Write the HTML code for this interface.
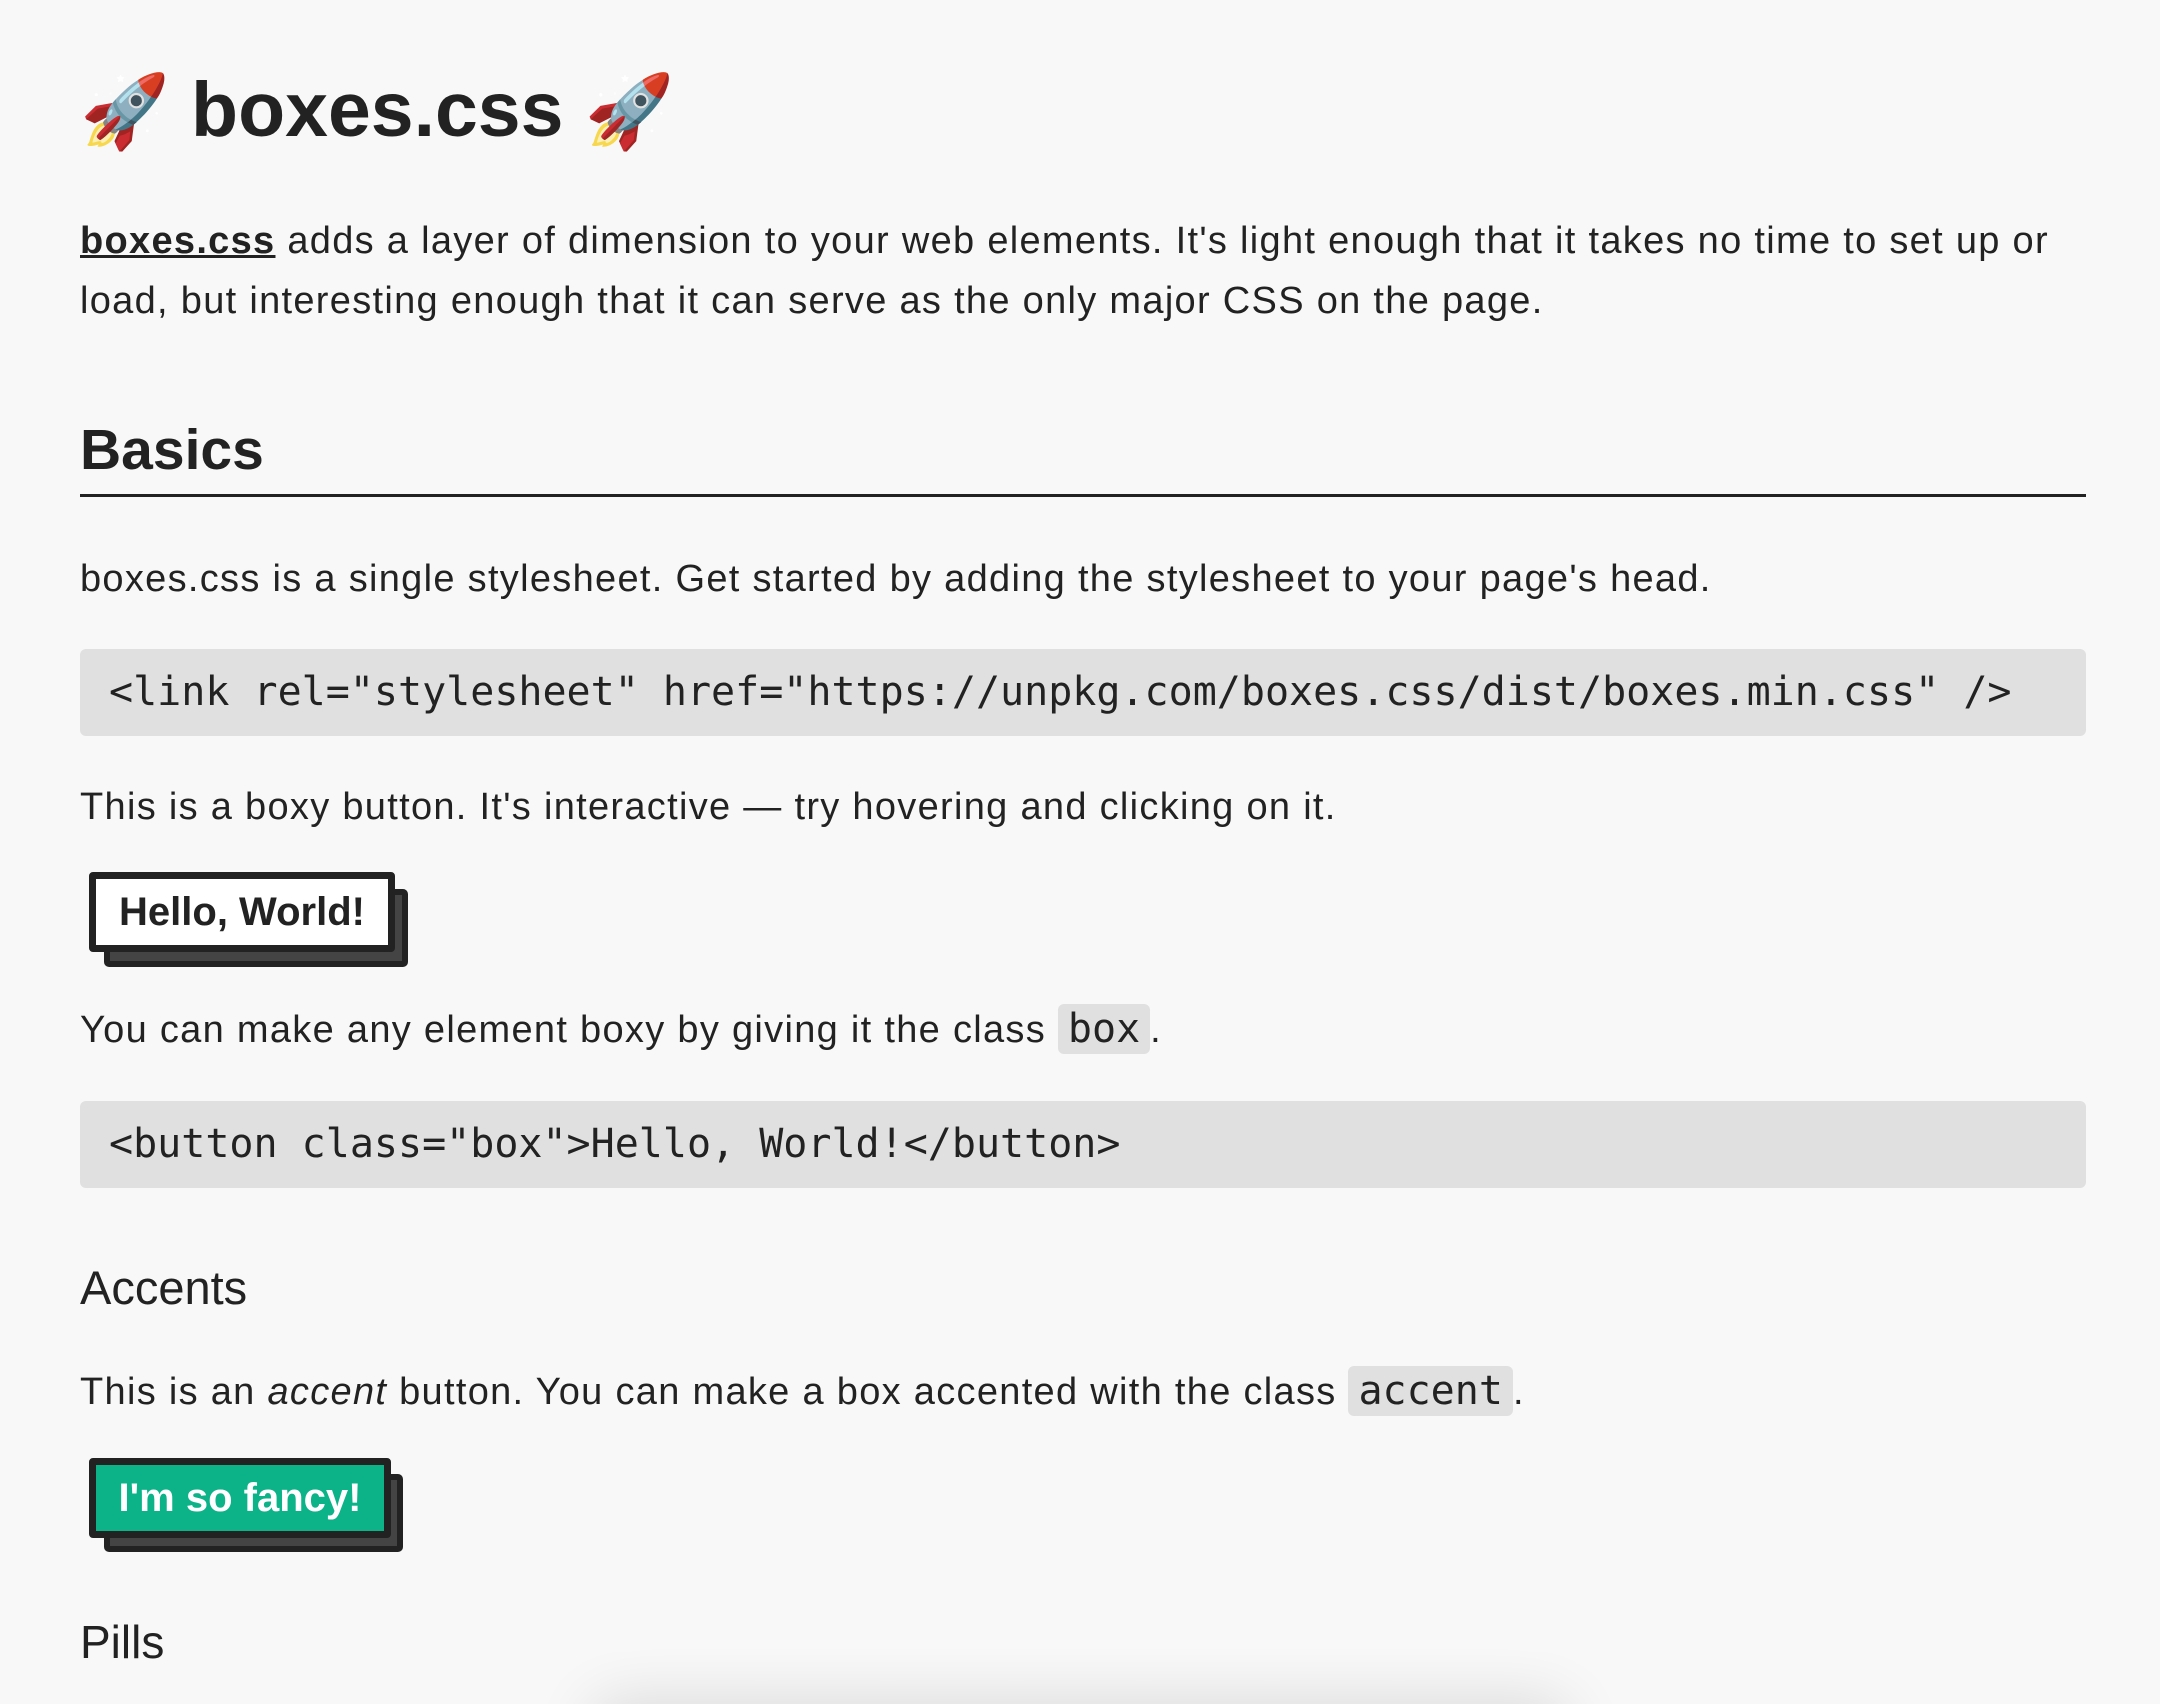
<!DOCTYPE html>
<html><head><meta charset="utf-8"><style>
html,body{margin:0;padding:0;background:#f8f8f8;width:2160px;height:1704px;overflow:hidden;position:relative;font-family:"Liberation Sans",sans-serif;color:#222;}
.a{position:absolute;white-space:nowrap;}
p.a{margin:0;font-size:38px;line-height:60px;letter-spacing:1.3px;}
.mono{font-family:"DejaVu Sans Mono","Liberation Mono",monospace;letter-spacing:0;}
.code{position:absolute;left:80px;width:2006px;background:#e0e0e0;border-radius:6px;box-sizing:border-box;padding-left:29px;font-size:40px;color:#222;}
.ic{background:#e0e0e0;border-radius:6px;padding:2px 10px;font-size:40px;}
.btn{position:absolute;box-sizing:border-box;border:7px solid #222;border-radius:4px;font-weight:bold;font-size:40px;display:flex;align-items:center;justify-content:center;}
.sh{position:absolute;background:#444;border:6px solid #222;border-radius:5px;box-sizing:border-box;}
</style></head><body>
<div class="a" style="left:80px;top:62px;font-size:77px;font-weight:bold;line-height:96px;"><span style="font-size:72px">🚀</span> boxes.css <span style="font-size:72px">🚀</span></div>
<p class="a" style="left:80px;top:211px;white-space:normal;width:2060px;"><b style="text-decoration:underline">boxes.css</b> adds a layer of dimension to your web elements. It's light enough that it takes no time to set up or<br>load, but interesting enough that it can serve as the only major CSS on the page.</p>
<div class="a" style="left:80px;top:412px;font-size:57px;font-weight:bold;line-height:76px;">Basics</div>
<div class="a" style="left:80px;top:494px;width:2006px;height:3px;background:#222;"></div>
<p class="a" style="left:80px;top:549px;">boxes.css is a single stylesheet. Get started by adding the stylesheet to your page's head.</p>
<div class="code mono" style="top:649px;height:87px;line-height:87px;">&lt;link rel="stylesheet" href="https://unpkg.com/boxes.css/dist/boxes.min.css" /&gt;</div>
<p class="a" style="left:80px;top:777px;">This is a boxy button. It's interactive — try hovering and clicking on it.</p>
<div class="sh" style="left:104px;top:889px;width:304px;height:78px;"></div>
<div class="btn" style="left:89px;top:872px;width:306px;height:80px;background:#fff;color:#222;">Hello, World!</div>
<p class="a" style="left:80px;top:999px;">You can make any element boxy by giving it the class <span class="ic mono">box</span>.</p>
<div class="code mono" style="top:1101px;height:87px;line-height:87px;">&lt;button class="box"&gt;Hello, World!&lt;/button&gt;</div>
<div class="a" style="left:80px;top:1261px;font-size:47px;line-height:54px;">Accents</div>
<p class="a" style="left:80px;top:1361px;">This is an <i>accent</i> button. You can make a box accented with the class <span class="ic mono">accent</span>.</p>
<div class="sh" style="left:104px;top:1474px;width:299px;height:78px;"></div>
<div class="btn" style="left:89px;top:1458px;width:302px;height:80px;background:#0db388;color:#fff;">I'm so fancy!</div>
<div class="a" style="left:80px;top:1615px;font-size:46px;line-height:54px;">Pills</div>
<div class="a" style="left:600px;top:1710px;width:960px;height:60px;background:#f8f8f8;border-radius:20px;box-shadow:0 0 60px 10px rgba(0,0,0,0.12);"></div>
</body></html>
